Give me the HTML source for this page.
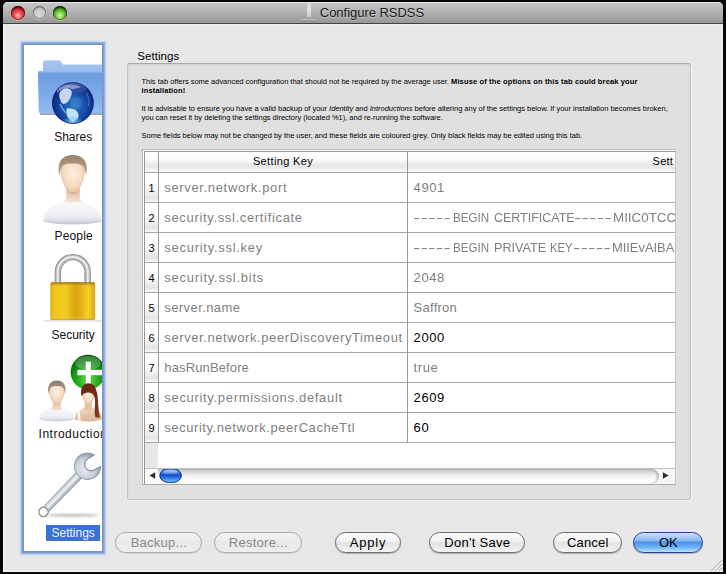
<!DOCTYPE html>
<html>
<head>
<meta charset="utf-8">
<title>Configure RSDSS</title>
<style>
*{box-sizing:border-box;margin:0;padding:0}
html,body{width:726px;height:574px;overflow:hidden;background:#060604;font-family:"Liberation Sans",sans-serif;}
.abs{position:absolute}
#win{position:absolute;left:3px;top:2px;width:720px;height:570px;background:#e8e8e8;border-radius:5px 5px 0 0;overflow:hidden}
#tbar{position:absolute;left:0;top:0;width:720px;height:22px;background:linear-gradient(#c8c8c8 0%,#b5b5b5 42%,#979797 100%);border-bottom:1px solid #444;box-shadow:inset 0 1px 0 #e6e6e6}
#title{position:absolute;left:316.800px;top:2.800px;font-size:13px;color:#1a1a1a;white-space:nowrap;letter-spacing:-.03px;text-shadow:0 1px 0 rgba(255,255,255,.35)}
.tl{position:absolute;top:3.600px;width:14px;height:14px;border-radius:50%;box-shadow:inset 0 2px 1.500px rgba(20,0,0,.6),inset 0 0 0 .800px rgba(40,10,10,.5),0 .800px .500px rgba(255,255,255,.5)}
.tl.g{box-shadow:inset 0 1.500px 1.500px rgba(60,60,60,.35),inset 0 0 0 .800px rgba(70,70,70,.55),0 .800px .500px rgba(255,255,255,.5)}
/* sidebar */
#side{position:absolute;left:17px;top:39px;width:85px;height:513px}
#sidein{position:absolute;left:4px;top:4px;width:78px;height:505.500px;background:#fff;overflow:hidden;box-shadow:0 0 0 1.500px #7b92c5,0 0 0 2.800px #8fa8da,0 0 1.500px 3.800px rgba(168,200,246,.75)}
.lbl{position:absolute;font-size:12px;color:#111;white-space:nowrap;letter-spacing:0}
/* group */
#grp{position:absolute;left:124px;top:61px;width:564px;height:437px;background:#e0e0e0;border:1px solid #c3c3c3;border-top-color:#a9a9a9;border-radius:3px;box-shadow:inset 0 1px 2px rgba(0,0,0,.08),1px 1px 0 rgba(255,255,255,.45)}
#desc{position:absolute;left:138.5px;top:74.7px;width:540px;font-size:7.5px;line-height:9px;color:#000;white-space:nowrap;letter-spacing:-.015px}
#desc b{letter-spacing:.14px}
/* table */
#tblo{position:absolute;left:139px;top:147px;width:534px;height:336px;border:1px solid #b9b9b9;border-right-color:#c6c6c6;border-bottom-color:#adadad;background:#fff}
#tbl{position:absolute;left:1px;top:1px;width:531px;height:333px;border:0 solid #979797;border-left-width:1px;border-top-width:1px;background:#fff;overflow:hidden}
.hd{position:absolute;top:0;height:21px;background:linear-gradient(#fff 0%,#fff 30%,#ececec 62%,#e6e6e6 70%,#fbfbfb 100%);border-bottom:1px solid #a4a4a4;font-size:11px;color:#000;text-align:center;line-height:19px;letter-spacing:.35px}
.vl{position:absolute;width:1px;background:#9a9a9a}
.row{position:absolute;left:0;width:530px;height:30px;border-bottom:1px solid #a9a9a9}
.rn{position:absolute;left:0;top:0;width:13px;height:29px;background:linear-gradient(#fff 0%,#fff 40%,#ececec 75%,#e4e4e4 85%,#f8f8f8 100%);font-size:11px;line-height:30px;text-align:center;color:#000}
.k,.v{position:absolute;top:0;height:29px;line-height:29px;font-size:13px;white-space:nowrap;color:#7f7f7f;letter-spacing:.6px}
.k{left:19.3px}.v{left:268.6px}
.blk{color:#000}
.w{position:absolute;top:0;left:0;transform-origin:0 0;display:block}
/* buttons */
.btn{position:absolute;top:530px;height:21px;border-radius:11px;border:1px solid #6e6e6e;background:linear-gradient(#fdfdfd 0%,#f1f1f1 45%,#e2e2e2 50%,#f4f4f4 100%);font-size:13px;line-height:20px;text-align:center;color:#000;letter-spacing:.5px;box-shadow:0 1px 1px rgba(0,0,0,.25)}
.btn.dis{color:#8a8a8a;border-color:#ababab;box-shadow:0 1px 0 rgba(0,0,0,.08);background:linear-gradient(#f4f4f4,#e9e9e9 50%,#efefef)}
.btn.def{border-color:#2a3f96;background:linear-gradient(#cfe2f8 0%,#8dbcf2 38%,#4d92ea 50%,#6db2f4 75%,#b4e6ff 100%)}
</style>
</head>
<body>
<div id="win">
  <div id="tbar">
    <div class="tl" style="left:8px;background:radial-gradient(circle at 50% 68%,#ffc4c0 0%,#f4525a 30%,#d0212c 62%,#7c0c14 90%,#4a060c 100%)"></div>
    <div class="tl g" style="left:29.500px;width:13px;height:13px;top:4.100px;background:radial-gradient(circle at 50% 62%,#d9d9d9 0%,#c4c4c4 55%,#9a9a9a 92%,#7f7f7f 100%)"></div>
    <div class="tl" style="left:50px;background:radial-gradient(circle at 50% 68%,#d8ffb0 0%,#7ed04a 30%,#3f9a22 62%,#1c5a0c 90%,#0c3604 100%)"></div>
    <div class="abs" style="left:304px;top:1px;width:4px;height:14px;background:linear-gradient(#d9d9d9,#ececec 50%,#cfcfcf);opacity:.85;filter:blur(.4px)"></div>
    <div class="abs" style="left:298px;top:16.500px;width:15px;height:1.500px;background:#c9c9c9;opacity:.8;filter:blur(.5px)"></div>
    <div id="title">Configure RSDSS</div>
  </div>

  <div class="abs" style="left:0;top:22px;width:720px;height:548px;box-shadow:inset 1px 0 0 #f7f7f7,inset -1px 0 0 #f3f3f3,inset 0 -1px 0 #f7f7f7,inset 0 1px 0 #efefef"></div>
  <div id="side"><div id="sidein">
<!--ICONS--><svg class="abs" style="left:0;top:0" width="78" height="505" viewBox="24 45 78 505">
<defs>
  <filter id="b1" x="-20%" y="-20%" width="140%" height="140%"><feGaussianBlur stdDeviation="0.6"/></filter>
  <filter id="b2" x="-30%" y="-30%" width="160%" height="160%"><feGaussianBlur stdDeviation="1.2"/></filter>
  <filter id="b3" x="-30%" y="-100%" width="160%" height="300%"><feGaussianBlur stdDeviation="0.9"/></filter>
  <!-- folder -->
  <linearGradient id="fback" x1="0" y1="0" x2="0" y2="1"><stop offset="0" stop-color="#a9c8f0"/><stop offset="1" stop-color="#8db4e8"/></linearGradient>
  <linearGradient id="ffront" x1="0" y1="0" x2="0" y2="1"><stop offset="0" stop-color="#a8c8f2"/><stop offset=".06" stop-color="#6d9de0"/><stop offset=".5" stop-color="#7aa9e6"/><stop offset="1" stop-color="#94bdf0"/></linearGradient>
  <radialGradient id="globe" cx=".52" cy=".58" r=".56"><stop offset="0" stop-color="#2f74c2"/><stop offset=".45" stop-color="#1c55ac"/><stop offset=".8" stop-color="#0f3290"/><stop offset="1" stop-color="#0a2078"/></radialGradient>
  <radialGradient id="gglow" cx=".5" cy=".5" r=".5"><stop offset="0" stop-color="#bfeaff" stop-opacity=".95"/><stop offset=".5" stop-color="#6cc4f0" stop-opacity=".6"/><stop offset="1" stop-color="#3a90e0" stop-opacity="0"/></radialGradient>
  <linearGradient id="ggloss" x1="0" y1="0" x2="0" y2="1"><stop offset="0" stop-color="#fff" stop-opacity=".55"/><stop offset="1" stop-color="#fff" stop-opacity="0"/></linearGradient>
  <clipPath id="gclip"><circle cx="72.9" cy="103" r="20.6"/></clipPath>
  <!-- person -->
  <radialGradient id="skin" cx=".5" cy=".45" r=".6"><stop offset="0" stop-color="#fdf0e2"/><stop offset=".6" stop-color="#f6dcc2"/><stop offset="1" stop-color="#dcb896"/></radialGradient>
  <linearGradient id="hair" x1="0" y1="0" x2="0" y2="1"><stop offset="0" stop-color="#9c8468"/><stop offset=".6" stop-color="#b39a80"/><stop offset="1" stop-color="#c9b49c"/></linearGradient>
  <linearGradient id="shirt" x1="0" y1="0" x2="0" y2="1"><stop offset="0" stop-color="#fbfbfd"/><stop offset=".7" stop-color="#eceef3"/><stop offset="1" stop-color="#c9cdd6"/></linearGradient>
  <linearGradient id="neck" x1="0" y1="0" x2="0" y2="1"><stop offset="0" stop-color="#d8b08a"/><stop offset="1" stop-color="#f7e8da"/></linearGradient>
  <!-- lock -->
  <linearGradient id="gold" x1="0" y1="0" x2="1" y2="0"><stop offset="0" stop-color="#dca812"/><stop offset=".08" stop-color="#f0c61c"/><stop offset=".35" stop-color="#f3cc20"/><stop offset=".55" stop-color="#d9a40e"/><stop offset=".68" stop-color="#e2b212"/><stop offset=".85" stop-color="#f5d226"/><stop offset="1" stop-color="#d8a412"/></linearGradient>
  <linearGradient id="goldv" x1="0" y1="0" x2="0" y2="1"><stop offset="0" stop-color="#7a5208" stop-opacity=".75"/><stop offset=".07" stop-color="#a07818" stop-opacity=".25"/><stop offset=".14" stop-color="#fff" stop-opacity="0"/><stop offset=".9" stop-color="#fff" stop-opacity="0"/><stop offset="1" stop-color="#a87c10" stop-opacity=".5"/></linearGradient>
  <linearGradient id="steel" x1="0" y1="0" x2="1" y2="0"><stop offset="0" stop-color="#8c8c8c"/><stop offset=".09" stop-color="#e4e4e4"/><stop offset=".18" stop-color="#9a9a9a"/><stop offset=".82" stop-color="#9a9a9a"/><stop offset=".91" stop-color="#e8e8e8"/><stop offset="1" stop-color="#8c8c8c"/></linearGradient>
  <!-- plus -->
  <radialGradient id="green" cx=".5" cy=".72" r=".7"><stop offset="0" stop-color="#6fe048"/><stop offset=".45" stop-color="#22a81e"/><stop offset=".8" stop-color="#0d7a10"/><stop offset="1" stop-color="#075a0a"/></radialGradient>
  <linearGradient id="hairw" x1="0" y1="0" x2="0" y2="1"><stop offset="0" stop-color="#6a2410"/><stop offset="1" stop-color="#8a3a1c"/></linearGradient>
  <linearGradient id="bodyw" x1="0" y1="0" x2="0" y2="1"><stop offset="0" stop-color="#f2dcc6"/><stop offset="1" stop-color="#d9b494"/></linearGradient>
  <linearGradient id="hairm" x1="0" y1="0" x2="0" y2="1"><stop offset="0" stop-color="#8c7a6a"/><stop offset="1" stop-color="#b8a490"/></linearGradient>
  <!-- wrench -->
  <linearGradient id="wr" x1="0" y1="0" x2="0" y2="1"><stop offset="0" stop-color="#8e9aa6"/><stop offset=".25" stop-color="#d4dbe2"/><stop offset=".5" stop-color="#eef1f5"/><stop offset=".75" stop-color="#b7c1cc"/><stop offset="1" stop-color="#8894a0"/></linearGradient>
  <radialGradient id="wrh" cx=".4" cy=".55" r=".65"><stop offset="0" stop-color="#e9edf4"/><stop offset=".6" stop-color="#c6cfdb"/><stop offset="1" stop-color="#8c98a6"/></radialGradient>
</defs>

<!-- ===== Shares: folder + globe ===== -->
<rect x="40" y="112.800" width="66" height="2.200" fill="#5a6a80" opacity=".6" filter="url(#b1)"/>
<path d="M43 62.5 q0-2.3 2.3-2.3 h13 q1.6 0 2.6 1.4 l2.2 2.9 H110 V80 H43z" fill="url(#fback)"/>
<path d="M38 72.5 q0-1.7 1.7-1.7 H110 V113.3 H40.4 q-1.6 0-1.7-1.7z" fill="url(#ffront)"/>
<g>
  <circle cx="72.9" cy="103" r="20.8" fill="url(#globe)"/>
  <g clip-path="url(#gclip)">
    <!-- continents -->
    <path d="M59.300 93.700 C60.500 90.500 63 88.800 65.400 88.300 C67.800 87.800 70.800 89 71.600 91 C72.200 93 71.400 95.300 70.600 97.200 C69.800 99 69.200 100.500 68 101.600 C66.600 103 65.200 104.200 63.700 104.100 C62 104 60.800 101.800 60.200 99.800 C59.600 97.800 58.800 95.600 59.300 93.700Z" fill="#e6f0fb" opacity=".85" filter="url(#b1)"/>
    <path d="M57 90 C60 86.500 65 84.800 70 84.600 C74 84.500 78 85.500 81 87 C78.500 88.300 75 88.500 72.500 89.500 C70 88 66 87.600 63 88.800 C60.500 89.800 58.800 91.500 57.500 94Z" fill="#b9c4ee" opacity=".55" filter="url(#b1)"/>
    <path d="M60 104 C61.500 107 63.500 110 65.600 113" fill="none" stroke="#a8d4f6" stroke-width="1.300" opacity=".7" filter="url(#b1)"/>
    <path d="M66.700 108.500 C70 107.800 74 109 76.700 111 C78.300 112.800 78.900 115 78.500 117 C77.500 119.500 75 121.200 72.400 121.600 C70 120.500 68.200 118.500 67.200 116.300 C66.300 113.800 66.100 111 66.700 108.500Z" fill="#d2f1ff" opacity=".9" filter="url(#b1)"/>
    <path d="M70 98 C73 96.500 77 96.500 80 98.500 C82 101 82 105 80 108 C77 109 73 108 70.500 106 C69 103.500 69 100.500 70 98Z" fill="#3f8fd2" opacity=".45" filter="url(#b2)"/>
    <path d="M86 92 C88.500 96 89.500 101 88.800 106" fill="none" stroke="#7fb2ea" stroke-width="1.100" opacity=".45" filter="url(#b1)"/>
    <ellipse cx="72.500" cy="121.500" rx="12" ry="5.500" fill="url(#gglow)" opacity=".8"/>
    <ellipse cx="72.900" cy="88.500" rx="14" ry="6.500" fill="url(#ggloss)" opacity=".5"/>
  </g>
  <circle cx="72.9" cy="103" r="20.5" fill="none" stroke="#0b1f6a" stroke-opacity=".55" stroke-width=".8"/>
</g>

<!-- ===== People ===== -->
<g>
  <!-- shirt -->
  <path d="M43.5 221 c.5-6 2-10 6-12.5 c5-3 11-5 15-8.5 h16 c4 3.5 10 5.500 15 8.500 c4 2.500 5.500 6.500 6 12.500 c-8 2.400-20 3-29 3 s-21-.6-29-3z" fill="url(#shirt)"/>
  <path d="M43.5 221 c8 2.400 20 3 29 3 s21-.6 29-3" fill="none" stroke="#b4b9c4" stroke-width=".9" opacity=".8"/>
  <!-- neck -->
  <path d="M66.300 188 h13.400 v9 c0 2 1 3 2.500 3.800 c-2.500 1.200-5.500 1.700-9.200 1.700 s-6.700-.5-9.200-1.700 c1.500-.8 2.500-1.800 2.500-3.800z" fill="url(#neck)"/>
  <!-- face -->
  <path d="M60.300 170 c0-8 5-12.500 12.400-12.500 s12.400 4.500 12.400 12.500 c0 6-1.600 11-4 15.500 c-2 4.500-5 8-8.400 8 s-6.400-3.500-8.400-8 c-2.400-4.500-4-9.500-4-15.500z" fill="url(#skin)"/>
  <path d="M66 188.500 c2 3.500 4.200 5 6.700 5 s4.700-1.500 6.700-5 c-1.500 3-4 4-6.700 4 s-5.200-1-6.700-4z" fill="#b8936c" opacity=".55" filter="url(#b1)"/>
  <!-- hair -->
  <path d="M59.300 176 c-1.200-5-1.200-10 .6-14 c2.300-4.800 7-7 12.800-7 s10.500 2.200 12.800 7 c1.800 4 1.800 9 .6 14 c-.6-3-1-6.500-2.400-9 c-1.800-3-5.500-3.600-11-3.600 s-9.200 .6-11 3.600 c-1.400 2.500-1.800 6-2.400 9z" fill="url(#hair)"/>
</g>

<!-- ===== Security: padlock ===== -->
<g>
  <rect x="44" y="320.200" width="58" height="1.500" fill="#999" opacity=".32" filter="url(#b1)"/>
  <path d="M57.900 284 V272 a14.850 14.850 0 0 1 29.700 0 V284" fill="none" stroke="#8f8f8f" stroke-width="6.400"/>
  <path d="M57.900 284 V272 a14.850 14.850 0 0 1 29.700 0 V284" fill="none" stroke="#b9b9b9" stroke-width="4.600"/>
  <path d="M57.700 284 V272 a15.050 15.050 0 0 1 30.100 0 V284" fill="none" stroke="#ececec" stroke-width="2" filter="url(#b1)"/>
  <rect x="50.300" y="282.300" width="44.800" height="37.700" rx="1.800" fill="url(#gold)"/>
  <rect x="50.300" y="282.300" width="44.800" height="37.700" rx="1.800" fill="url(#goldv)"/>
</g>

<!-- ===== Introductions ===== -->
<g>
  <circle cx="88" cy="372.200" r="17.400" fill="url(#green)"/>
  <ellipse cx="88" cy="363" rx="12.500" ry="7" fill="#fff" opacity=".22"/>
  <path d="M85.500 361.500 h5.600 v8.300 h12 v5.700 h-12 v9 h-5.600 v-9 h-8.300 v-5.700 h8.300z" fill="#fff"/>
  <path d="M85.500 361.500 h5.600 v8.300 h12 v5.700 h-12 v9 h-5.600 v-9 h-8.300 v-5.700 h8.300z" fill="none" stroke="#1c8a1c" stroke-width=".7" opacity=".5"/>
  <!-- man -->
  <path d="M39.300 419.500 c.3-4 1.200-6.500 3.700-8 c3-1.800 6.500-3 9-5 h9.600 c2.500 2 6 3.200 9 5 c2.500 1.500 3.400 4 3.700 8 c-5 1.500-12 1.900-17.500 1.900 s-12.500-.4-17.500-1.900z" fill="url(#shirt)"/>
  <path d="M52.800 400 h8 v6 c0 2 1 2.500 2 3 c-2 1.300-4 1.800-6 1.800 s-4-.5-6-1.800 c1-.5 2-1 2-3z" fill="url(#neck)"/>
  <path d="M49 390.500 c0-5.200 3.200-8.300 7.800-8.300 s7.800 3.100 7.800 8.300 c0 3.800-1 7-2.500 9.800 c-1.300 2.700-3.200 4.200-5.300 4.200 s-4-1.500-5.300-4.200 c-1.500-2.800-2.500-6-2.500-9.800z" fill="url(#skin)"/>
  <path d="M48.600 394 c-.9-3.200-.9-6.500 .4-9 c1.500-3 4.300-4.400 7.800-4.400 s6.300 1.400 7.800 4.400 c1.300 2.500 1.300 5.800 .4 9 c-.4-2-.6-4-1.500-5.600 c-1.100-2-3.400-2.300-6.700-2.300 s-5.600 .3-6.700 2.300 c-.9 1.600-1.100 3.600-1.500 5.600z" fill="url(#hairm)"/>
  <!-- woman -->
  <path d="M74.800 419.500 c.3-4 1-6.500 3.300-8 c2.600-1.600 5.400-2.600 7.400-4.500 h6 c2 1.900 5 2.900 7.500 4.500 c2.300 1.500 3 4 3.300 8 c-4 1.500-9 1.900-14 1.900 s-9.500-.4-13.500-1.900z" fill="url(#bodyw)"/>
  <path d="M77.300 411 l2.300-1.200 l1.200 11 l-2.900-.3z" fill="#f8f8fa" opacity=".9"/>
  <path d="M84.800 400 h7 v6 c0 1.500 .8 2.200 1.800 2.800 c-2 1.200-3.500 1.600-5.300 1.600 s-3.300-.4-5.300-1.600 c1-.6 1.800-1.300 1.800-2.800z" fill="#e6c4a2"/>
  <path d="M82 393.500 c0-4.600 2.600-7.300 6.300-7.300 s6.300 2.700 6.300 7.300 c0 3-.8 5.600-2 7.800 c-1.100 2.100-2.600 3.300-4.300 3.300 s-3.200-1.200-4.300-3.300 c-1.200-2.200-2-4.800-2-7.800z" fill="url(#skin)"/>
  <path d="M81.500 396 c-.8-3-.7-6.500 .8-9 c1.400-2.500 3.500-3.700 6-3.700 c3 0 5.200 1.200 6.600 3.700 c1.600 3 2.500 6.500 2.800 11 c.4 6 1 13 2.200 19.500 c-1.800 .6-3.400 .4-4.800-.4 c-.6-4-.4-8-.2-11.500 c.3-3.500 .3-6.500-.6-9 c-.8-2.300-2.600-3.600-5.300-4 c-2.800-.4-5 .6-6.200 2.200 c-.6 1-.9 1.200-1.300 1.200z" fill="url(#hairw)"/>
</g>

<!-- ===== Settings: wrench ===== -->
<g>
  <ellipse cx="73" cy="515.300" rx="26" ry="1.600" fill="#8a8a8a" opacity=".5" filter="url(#b3)"/>
  <g transform="translate(43.500 511.900) rotate(-46)">
    <path d="M3 -4 L54 -4.400 L54 4.400 L3 4z" fill="url(#wr)"/>
    <g transform="translate(63.500 0) rotate(17)">
      <path d="M11.490 -6.500 L4 -6.500 A6.500 6.500 0 0 0 4 6.500 L11.490 6.500 A13.200 13.200 0 1 1 11.490 -6.500Z" fill="url(#wrh)" stroke="#8e9aa8" stroke-width=".9"/>
      <path d="M10 -6.500 L4 -6.500 A6.500 6.500 0 0 0 4 6.500 L10 6.500" fill="none" stroke="#76828f" stroke-width="1.100" opacity=".55"/>
    </g>
    <circle cx="0" cy="0" r="5.400" fill="#8c9096"/>
    <circle cx="0" cy="0" r="3.900" fill="#fff"/>
  </g>
</g>
</svg>
<!--/ICONS-->

    <div class="lbl" style="left:30.2px;top:85.3px">Shares</div>
    <div class="lbl" style="left:30.5px;top:183.8px;letter-spacing:.15px">People</div>
    <div class="lbl" style="left:27.5px;top:282.8px">Security</div>
    <div class="lbl" style="left:14.6px;top:381.8px;letter-spacing:.5px">Introduction</div>
    <div class="abs" style="left:22px;top:480px;width:54px;height:16px;background:#3a72d6"></div>
    <div class="lbl" style="left:27.5px;top:480.8px;color:#eef3ff">Settings</div>
  </div></div>

  <div class="abs" id="hset" style="left:134.2px;top:47px;font-size:11.5px;line-height:14px;letter-spacing:.08px;color:#000">Settings</div>
  <div id="grp"></div>
  <div id="desc"><span class="dl" id="d1">This tab offers some advanced configuration that should not be required by the average user. <b>Misuse of the options on this tab could break your</b></span><br><span class="dl" id="d2"><b>installation!</b></span><br><br><span class="dl" id="d3">It is advisable to ensure you have a valid backup of your <i>Identity</i> and <i>Introductions</i> before altering any of the settings below. If your installation becomes broken,</span><br><span class="dl" id="d4">you can reset it by deleting the settings directory (located %1), and re-running the software.</span><br><br><span class="dl" id="d5">Some fields below may not be changed by the user, and these fields are coloured grey. Only black fields may be edited using this tab.</span></div>

  <div id="tblo"><div id="tbl">
    <div class="hd" style="left:0;width:13px"></div>
    <div class="hd" style="left:14px;width:248px">Setting Key</div>
    <div class="hd" style="left:263px;width:267px"></div><div class="abs" id="sett" style="left:507.600px;top:0;font-size:11px;line-height:19px;letter-spacing:.2px;color:#000">Sett</div>
    <div class="abs" style="left:0;top:291px;width:13px;height:25px;background:#e8e8e8"></div>
    <div class="row" style="top:21px"><div class="rn">1</div><div class="k" style="letter-spacing:0.65px">server.network.port</div><div class="v">4901</div></div>
    <div class="row" style="top:51px"><div class="rn">2</div><div class="k" style="letter-spacing:0.66px">security.ssl.certificate</div><div class="v" id="cert" style="letter-spacing:0"><span class="w" style="left:-0.2px;transform:scaleX(1.670);letter-spacing:.245px">-----</span><span class="w" style="left:39.7px;transform:scaleX(0.892)">BEGIN</span><span class="w" style="left:80.1px;transform:scaleX(0.960)">CERTIFICATE</span><span class="w" style="left:160.6px;transform:scaleX(1.670);letter-spacing:.245px">-----</span><span class="w" style="left:199.5px;transform:scaleX(1.028)">MIIC0TCC</span></div></div>
    <div class="row" style="top:81px"><div class="rn">3</div><div class="k" style="letter-spacing:0.72px">security.ssl.key</div><div class="v" id="pkey" style="letter-spacing:0"><span class="w" style="left:-0.2px;transform:scaleX(1.670);letter-spacing:.245px">-----</span><span class="w" style="left:39.7px;transform:scaleX(0.892)">BEGIN</span><span class="w" style="left:80.1px;transform:scaleX(0.974)">PRIVATE</span><span class="w" style="left:136.9px;transform:scaleX(0.869)">KEY</span><span class="w" style="left:159.7px;transform:scaleX(1.670);letter-spacing:.245px">-----</span><span class="w" style="left:198.5px;transform:scaleX(0.990)">MIIEvAIBA</span></div></div>
    <div class="row" style="top:111px"><div class="rn">4</div><div class="k" style="letter-spacing:0.74px">security.ssl.bits</div><div class="v">2048</div></div>
    <div class="row" style="top:141px"><div class="rn">5</div><div class="k" style="letter-spacing:0.41px">server.name</div><div class="v" style="letter-spacing:.26px">Saffron</div></div>
    <div class="row" style="top:171px"><div class="rn">6</div><div class="k" style="letter-spacing:0.59px">server.network.peerDiscoveryTimeout</div><div class="v blk">2000</div></div>
    <div class="row" style="top:201px"><div class="rn">7</div><div class="k" style="letter-spacing:0.13px">hasRunBefore</div><div class="v">true</div></div>
    <div class="row" style="top:231px"><div class="rn">8</div><div class="k" style="letter-spacing:0.68px">security.permissions.default</div><div class="v blk">2609</div></div>
    <div class="row" style="top:261px"><div class="rn">9</div><div class="k" style="letter-spacing:0.56px">security.network.peerCacheTtl</div><div class="v blk">60</div></div>
    <div class="vl" style="left:13px;top:0;height:291px"></div>
    <div class="vl" style="left:262px;top:0;height:291px"></div>
    <div id="sb" class="abs" style="left:0;top:316px;width:530px;height:16px;background:#f6f6f6;border-top:1px solid #c2c2c2">
      <div class="abs" style="left:13px;top:0;width:500.500px;height:15px;border-radius:0 8px 8px 0/0 7.500px 7.500px 0;background:linear-gradient(#b4b4b4 0%,#cfcfcf 12%,#e6e6e6 30%,#f6f6f6 55%,#fff 80%,#fdfdfd 100%);box-shadow:inset -2.500px 0 2.500px -1px rgba(0,0,0,.28)"></div>
      <div class="abs" style="left:0;top:0;width:14px;height:15px;background:linear-gradient(90deg,#fafafa 70%,rgba(250,250,250,0))"></div>
      <svg class="abs" style="left:0;top:0" width="530" height="15" viewBox="0 0 530 15">
        <defs>
          <radialGradient id="thg" cx=".5" cy=".8" r=".75"><stop offset="0" stop-color="#8fdcff"/><stop offset=".35" stop-color="#3d8ef0"/><stop offset=".7" stop-color="#1c55d0"/><stop offset="1" stop-color="#0d2f96"/></radialGradient>
          <linearGradient id="thl" x1="0" y1="0" x2="0" y2="1"><stop offset="0" stop-color="#fff" stop-opacity=".6"/><stop offset="1" stop-color="#fff" stop-opacity=".1"/></linearGradient><linearGradient id="thv" x1="0" y1="0" x2="0" y2="1"><stop offset="0" stop-color="#4f86ea"/><stop offset=".3" stop-color="#3a74e2"/><stop offset=".48" stop-color="#1c4cc4"/><stop offset=".72" stop-color="#3484ee"/><stop offset="1" stop-color="#7ccfff"/></linearGradient>
        </defs>
        <path d="M4.500 6.500 L10.200 3.300 L10.200 9.700Z" fill="#2e2e2e"/>
        <path d="M523.600 6.500 L517.900 3.300 L517.900 9.700Z" fill="#2e2e2e"/>
        <rect x="14.800" y="-.300" width="21.600" height="13.700" rx="8.600" ry="6.850" fill="url(#thv)" stroke="#12308e" stroke-width="1"/>
        <rect x="18.500" y="1.100" width="14.200" height="4.200" rx="5" ry="2.100" fill="url(#thl)"/>
      </svg>
    </div>
  </div></div>

  <div class="btn dis" style="left:112px;width:87px;letter-spacing:.25px;text-indent:.8px">Backup...</div>
  <div class="btn dis" style="left:211px;width:88px;letter-spacing:.28px;text-indent:.6px">Restore...</div>
  <div class="btn" style="left:332px;width:66px;letter-spacing:.76px">Apply</div>
  <div class="btn" style="left:426px;width:96px;letter-spacing:.28px;text-indent:.6px">Don't Save</div>
  <div class="btn" style="left:550px;width:69px;letter-spacing:.18px;text-indent:.4px">Cancel</div>
  <div class="btn def" style="left:630px;width:70px;letter-spacing:-.2px;text-indent:.6px">OK</div>
  <svg class="abs" style="left:706px;top:556px" width="14" height="14" viewBox="0 0 14 14"><g stroke="#8a8a8a" stroke-width="1"><path d="M2 13.500L13.500 2M6 13.500L13.500 6M10 13.500L13.500 10"/></g><g stroke="#fbfbfb" stroke-width="1"><path d="M3 13.500L13.500 3M7 13.500L13.500 7M11 13.500L13.500 11"/></g></svg>
</div>
</body>
</html>
